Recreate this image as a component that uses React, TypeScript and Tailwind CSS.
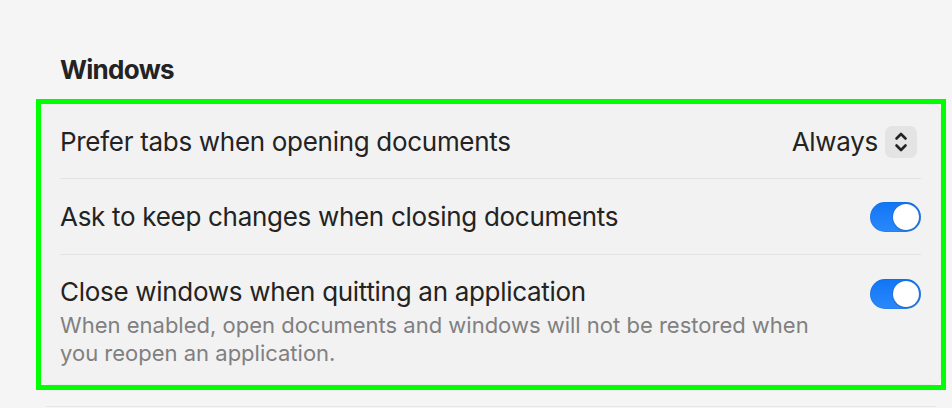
import React from 'react';

function Toggle({ on = true }: { on?: boolean }) {
  return (
    <div
      className={`w-[51px] h-[30px] rounded-full p-[2px] flex items-center shadow-[inset_0_0_0_1px_rgba(0,0,0,0.06)] ${
        on ? 'bg-gradient-to-b from-[#0f76f5] to-[#2a88fb] justify-end' : 'bg-[#e2e2e2] justify-start'
      }`}
    >
      <div className="w-[26px] h-[26px] rounded-full bg-white shadow-[0_0_1px_rgba(0,0,0,0.35),0_1px_2px_rgba(0,0,0,0.2)]" />
    </div>
  );
}

function Stepper() {
  return (
    <div className="w-[32px] h-[32px] rounded-[7px] bg-[#e4e4e4] flex items-center justify-center">
      <svg width="14" height="24" viewBox="0 0 14 24" fill="none">
        <path d="M2.5 8.5 L7 4 L11.5 8.5" stroke="#222" strokeWidth="2.6" strokeLinecap="round" strokeLinejoin="round" />
        <path d="M2.5 15.5 L7 20 L11.5 15.5" stroke="#222" strokeWidth="2.6" strokeLinecap="round" strokeLinejoin="round" />
      </svg>
    </div>
  );
}

export default function App() {
  const font = { fontFamily: 'Inter, "Noto Sans", sans-serif' };

  return (
    <div className="w-[952px] h-[408px] bg-[#f5f5f5] overflow-hidden text-[#232323]" style={font}>
      <div className="pl-[36px] pr-[6px] pt-[54px]">
        <h2 className="pl-[24px] text-[26px] leading-[32px] font-bold tracking-[-0.7px]">Windows</h2>

        {/* highlighted settings group */}
        <div className="mt-[13px] border-[5px] border-[#00ff00] h-[291px]">
          <div className="h-full rounded-[9px] bg-[#f2f2f2] pl-[18px] pr-[19px] border border-[#ebebeb]">
            <div className="h-[73px] flex items-center justify-between">
              <span className="text-[26px] leading-[32px] tracking-[-0.3px]">Prefer tabs when opening documents</span>
              <div className="flex items-center gap-[7px] mr-[4px]">
                <span className="text-[26px] leading-[32px] tracking-[-0.3px]">Always</span>
                <Stepper />
              </div>
            </div>
            <div className="h-px bg-[#e3e3e3]" />

            <div className="h-[75px] flex items-center justify-between">
              <span className="text-[26px] leading-[32px] tracking-[-0.3px]">Ask to keep changes when closing documents</span>
              <Toggle />
            </div>
            <div className="h-px bg-[#e3e3e3]" />

            <div className="pt-[21px] flex items-start justify-between">
              <div>
                <div className="text-[26px] leading-[32px] tracking-[-0.3px]">Close windows when quitting an application</div>
                <p className="mt-[3px] text-[22px] leading-[28px] text-[#808080] w-[770px]">
                  When enabled, open documents and windows will not be restored when you reopen an application.
                </p>
              </div>
              <div className="mt-[3px]">
                <Toggle />
              </div>
            </div>
          </div>
        </div>

        <div className="mt-[16px] mx-[10px] h-px bg-[#e6e6e6]" />
      </div>
    </div>
  );
}
